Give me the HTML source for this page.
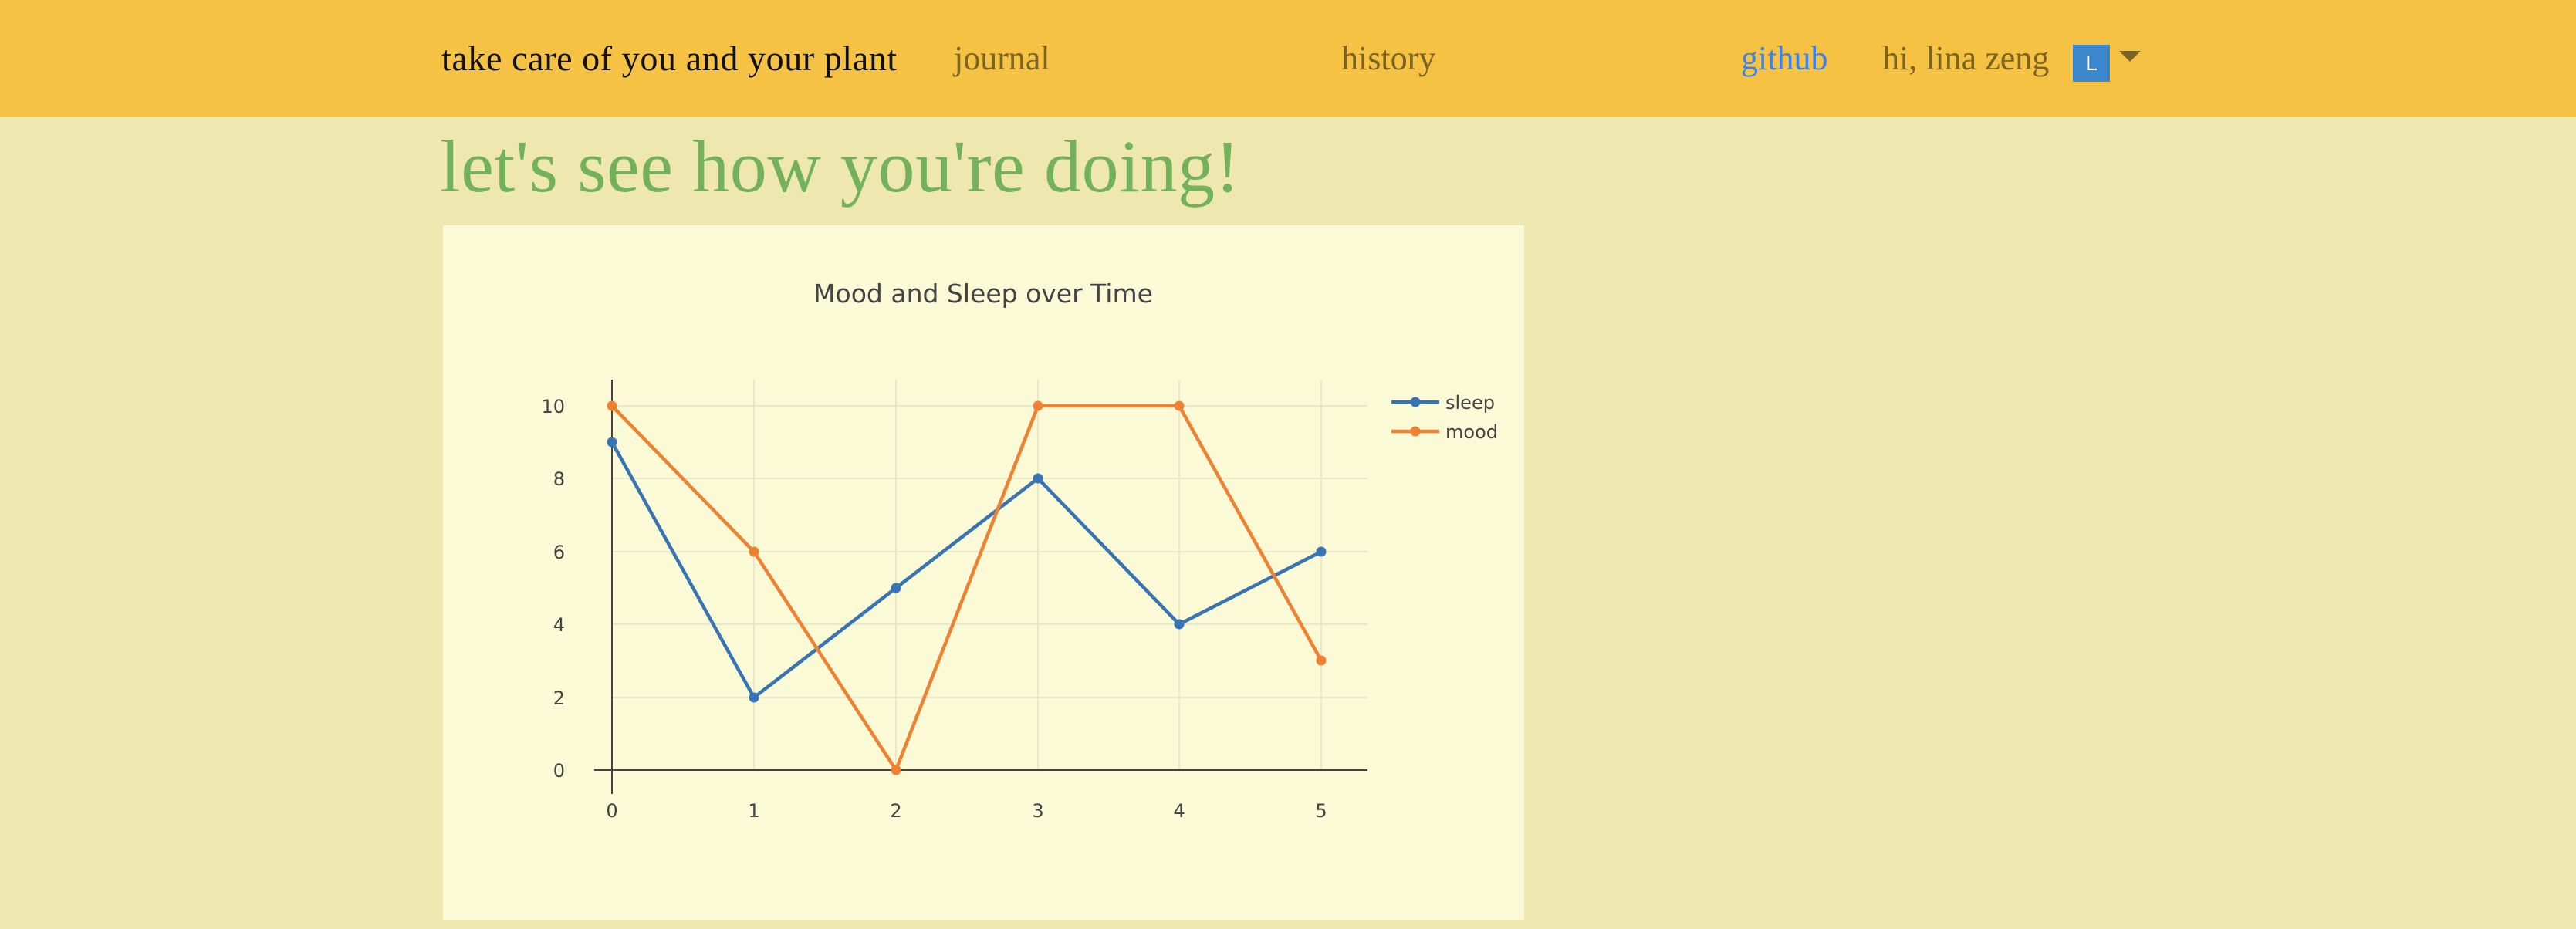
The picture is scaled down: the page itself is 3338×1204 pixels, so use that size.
<!DOCTYPE html>
<html><head><meta charset="utf-8"><style>
html,body{margin:0;padding:0;}
body{width:3338px;height:1204px;background:#eee8b0;position:relative;overflow:hidden;font-family:"Liberation Serif",serif;}
.nav{position:absolute;left:0;top:0;width:3338px;height:152px;background:#f5c243;}
.t{position:absolute;top:48px;font-size:44px;line-height:56px;white-space:nowrap;}
h1{position:absolute;left:570px;top:156px;margin:0;font-weight:normal;font-size:96px;line-height:120px;color:#73b25a;white-space:nowrap;letter-spacing:0.6px;}
.panel{position:absolute;left:574px;top:292px;width:1401px;height:900px;background:#fafad6;}
svg{position:absolute;left:0;top:0;}
</style></head><body>
<div class="nav"></div>
<div class="t" style="left:572px;color:#111;font-size:46px;letter-spacing:0.6px;">take care of you and your plant</div>
<div class="t" style="left:1236px;color:#7b6322;">journal</div>
<div class="t" style="left:1738px;color:#7b6322;">history</div>
<div class="t" style="left:2256px;color:#3b82ee;">github</div>
<div class="t" style="left:2439px;color:#7b6322;">hi, lina zeng</div>
<div style="position:absolute;left:2686px;top:58px;width:48px;height:48px;background:#3b88cf;color:#fff;font-family:'Liberation Sans',sans-serif;font-size:28px;line-height:48px;text-align:center;">L</div>
<div style="position:absolute;left:2746px;top:66px;width:0;height:0;border-left:14px solid transparent;border-right:14px solid transparent;border-top:14px solid #7b6322;"></div>
<h1>let's see how you're doing!</h1>
<div class="panel"></div>
<svg width="3338" height="1204" font-family="'DejaVu Sans','Liberation Sans',sans-serif">
<g stroke="#ebe8c8" stroke-width="2">
<line x1="977" y1="492" x2="977" y2="998"/><line x1="1161" y1="492" x2="1161" y2="998"/><line x1="1345" y1="492" x2="1345" y2="998"/><line x1="1528" y1="492" x2="1528" y2="998"/><line x1="1712" y1="492" x2="1712" y2="998"/>
<line x1="793" y1="526" x2="1772" y2="526"/><line x1="793" y1="620" x2="1772" y2="620"/><line x1="793" y1="715" x2="1772" y2="715"/><line x1="793" y1="809" x2="1772" y2="809"/><line x1="793" y1="904" x2="1772" y2="904"/>
</g>
<line x1="793" y1="492" x2="793" y2="1029" stroke="#444" stroke-width="2"/>
<line x1="770" y1="998" x2="1772" y2="998" stroke="#444" stroke-width="2"/>
<g fill="#444" font-size="24" text-anchor="end">
<text x="732" y="535">10</text><text x="732" y="629">8</text><text x="732" y="724">6</text><text x="732" y="818">4</text><text x="732" y="913">2</text><text x="732" y="1007">0</text>
</g>
<g fill="#444" font-size="24" text-anchor="middle">
<text x="793" y="1059">0</text><text x="977" y="1059">1</text><text x="1161" y="1059">2</text><text x="1345" y="1059">3</text><text x="1528" y="1059">4</text><text x="1712" y="1059">5</text>
</g>
<text x="1274" y="392" fill="#444" font-size="33" text-anchor="middle">Mood and Sleep over Time</text>
<polyline fill="none" stroke="#3874b3" stroke-width="4.5" stroke-linejoin="round" points="793,573 977,904 1161,762 1345,620 1528,809 1712,715"/>
<polyline fill="none" stroke="#ef8132" stroke-width="4.5" stroke-linejoin="round" points="793,526 977,715 1161,998 1345,526 1528,526 1712,856"/>
<g fill="#3874b3"><circle cx="793" cy="573" r="6.5"/><circle cx="977" cy="904" r="6.5"/><circle cx="1161" cy="762" r="6.5"/><circle cx="1345" cy="620" r="6.5"/><circle cx="1528" cy="809" r="6.5"/><circle cx="1712" cy="715" r="6.5"/></g>
<g fill="#ef8132"><circle cx="793" cy="526" r="6.5"/><circle cx="977" cy="715" r="6.5"/><circle cx="1161" cy="998" r="6.5"/><circle cx="1345" cy="526" r="6.5"/><circle cx="1528" cy="526" r="6.5"/><circle cx="1712" cy="856" r="6.5"/></g>
<line x1="1803" y1="521" x2="1865" y2="521" stroke="#3874b3" stroke-width="4.5"/><circle cx="1834" cy="521" r="6.5" fill="#3874b3"/>
<line x1="1803" y1="559" x2="1865" y2="559" stroke="#ef8132" stroke-width="4.5"/><circle cx="1834" cy="559" r="6.5" fill="#ef8132"/>
<text x="1873" y="530" fill="#444" font-size="24">sleep</text>
<text x="1873" y="568" fill="#444" font-size="24">mood</text>
</svg>
</body></html>
